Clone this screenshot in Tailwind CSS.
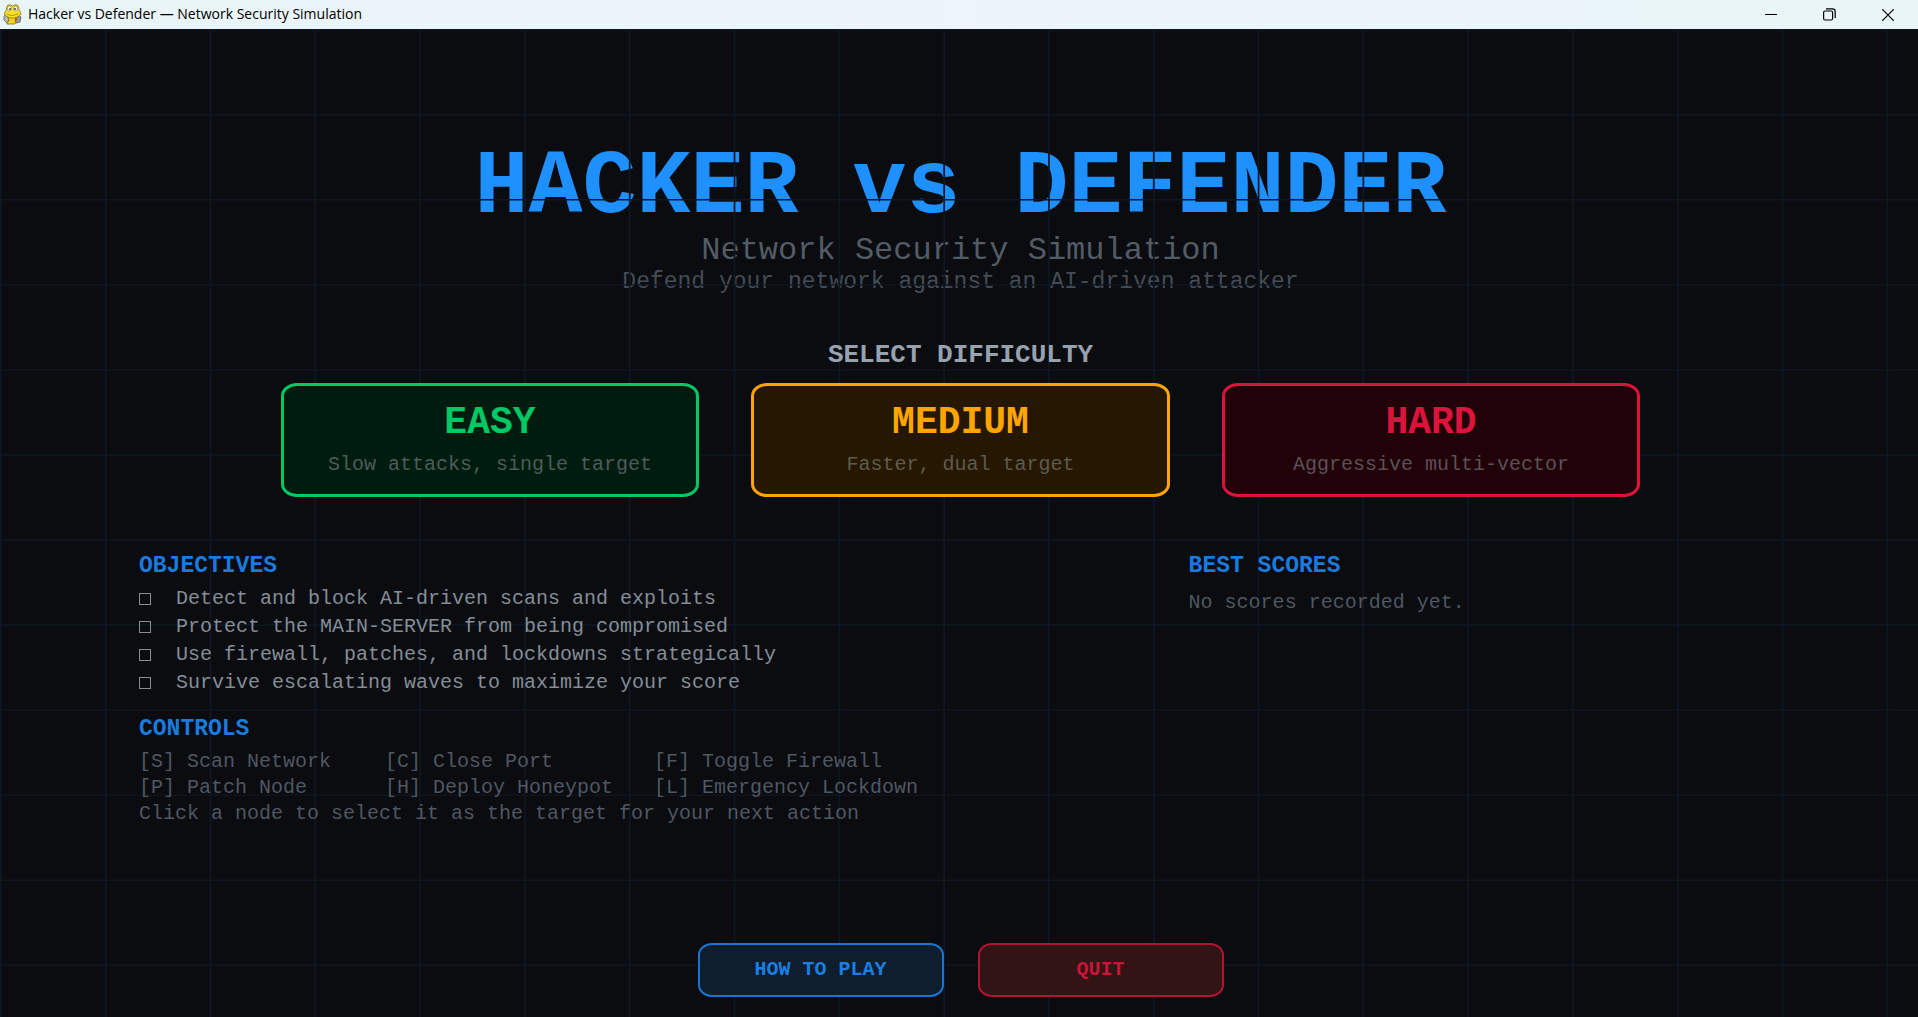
<!DOCTYPE html>
<html lang="en">
  <head>
    <meta charset="UTF-8" />
    <meta name="viewport" content="width=device-width, initial-scale=1.0" />
    <title>Hacker vs Defender — Network Security Simulation</title>
    <script src="https://cdn.jsdelivr.net/npm/@tailwindcss/browser@4"></script>
  </head>
  <body class="min-h-screen flex flex-col bg-[#0a0c10] font-['Liberation_Mono','Courier_New',monospace]">

    <!-- Window title bar -->
    <header class="h-[29px] flex items-center justify-between pl-[3px] bg-linear-to-r from-[#e9f5f7] via-[#edf4fc] to-[#e9f5f7] text-black">
      <div class="flex items-center gap-[6px]">
        <svg class="w-[19px] h-[21px]" viewBox="0 0 19 21" aria-hidden="true">
          <path d="M1 12l3-2 2 4 2 4-3 2-4-4z" fill="#b9bcb4" stroke="#5c5f55" stroke-width=".8" />
          <path d="M12 13l4-2 2 2-1 5-4 1z" fill="#9b9d98" stroke="#5c5f55" stroke-width=".8" />
          <path d="M5 13h8l-1 4 1 1-1 2H4v-2l2-1z" fill="#f2d51c" stroke="#7a6a10" stroke-width=".8" />
          <path d="M4 2Q5 .5 7 .8L9.500 2 12 .8q3-.5 3.500 2L16 6l2 3q.3 2-2 3l-4 2H7l-4-2q-2-1-1.500-3L3 7z" fill="#f7e02a" stroke="#8a7912" stroke-width=".8" />
          <ellipse cx="6.500" cy="4.500" rx="2" ry="2.600" fill="#fff" stroke="#7d7648" stroke-width=".6" />
          <ellipse cx="12.500" cy="4.500" rx="2" ry="2.600" fill="#fff" stroke="#7d7648" stroke-width=".6" />
          <circle cx="7" cy="5" r=".9" fill="#333" />
          <circle cx="12" cy="5" r=".9" fill="#333" />
          <path d="M3.500 10q6 3 12-.5" fill="none" stroke="#a58d0c" stroke-width=".9" />
          <circle cx="13" cy="15" r="1.200" fill="#d9453a" />
        </svg>
        <span class="text-[14px] leading-[20px] pb-[2px] font-['Segoe_UI','Open_Sans','Noto_Sans',sans-serif]">Hacker vs Defender — Network Security Simulation</span>
      </div>
      <div class="flex h-full">
        <button class="w-[58px] flex items-center justify-center" aria-label="Minimize">
          <svg class="w-[12px] h-[12px]" viewBox="0 0 12 12" fill="none" stroke="#000"><path d="M0 5.500h12" /></svg>
        </button>
        <button class="w-[58px] flex items-center justify-center" aria-label="Restore">
          <svg class="w-[13px] h-[13px]" viewBox="0 0 13 13" fill="none" stroke="#000" stroke-width="1.200"><rect x=".6" y="3" width="9" height="9" rx="1.500" /><path d="M3 .8h6.500q2.700 0 2.700 2.700V10" /></svg>
        </button>
        <button class="w-[60px] flex items-center justify-center" aria-label="Close">
          <svg class="w-[12px] h-[12px]" viewBox="0 0 12 12" fill="none" stroke="#000" stroke-width="1.200"><path d="M0 0l12 12M12 0L0 12" /></svg>
        </button>
      </div>
    </header>

    <main class="relative grow flex flex-col overflow-hidden pt-[114px] pb-[20px] pl-[3px]">
      <!-- Grid lines, drawn over the headline but under everything else -->
      <svg id="grid" class="absolute inset-0 w-full h-full pointer-events-none" viewBox="0 0 1098 697" preserveAspectRatio="none" stroke="#0f1722" stroke-width="1" aria-hidden="true"></svg>

      <div class="text-center">
        <h1 class="text-[90px] leading-[90px] font-bold text-[#1e90ff]">HACKER vs DEFENDER</h1>
        <p class="mt-[2px] text-[32px] leading-[32px] text-[#535b65]">Network Security Simulation</p>
        <p class="text-[23px] leading-[30px] text-[#444c56]">Defend your network against an AI-driven attacker</p>
      </div>

      <h2 class="relative mt-[42px] text-center text-[26px] leading-[32px] font-bold text-[#98a2ae]">SELECT DIFFICULTY</h2>

      <div class="relative mt-[12px] w-[71%] mx-auto grid grid-cols-3 gap-[52px]">
        <button class="border-3 border-[#00c864] bg-[#001c0e] rounded-[16px_/_13px] py-[17px] text-center">
          <span class="block text-[38px] leading-[40px] font-bold text-[#00c864]">EASY</span>
          <span class="block mt-[10px] text-[20px] leading-[24px] text-[#4c5c5b]">Slow attacks, single target</span>
        </button>
        <button class="border-3 border-[#ffa500] bg-[#261800] rounded-[16px_/_13px] py-[17px] text-center">
          <span class="block text-[38px] leading-[40px] font-bold text-[#ffa500]">MEDIUM</span>
          <span class="block mt-[10px] text-[20px] leading-[24px] text-[#5e5a50]">Faster, dual target</span>
        </button>
        <button class="border-3 border-[#dc143c] bg-[#210208] rounded-[16px_/_13px] py-[17px] text-center">
          <span class="block text-[38px] leading-[40px] font-bold text-[#dc143c]">HARD</span>
          <span class="block mt-[10px] text-[20px] leading-[24px] text-[#5c5058]">Aggressive multi-vector</span>
        </button>
      </div>

      <div class="relative mt-[55px] pl-[136px] grid grid-cols-[59%_1fr] text-[20px]">
        <div>
          <h3 class="text-[23px] leading-[28px] font-bold text-[#1a7ade]">OBJECTIVES</h3>
          <ul class="mt-[5px] leading-[28px] text-[#858d97]">
            <li class="flex items-center gap-[25px]"><span class="w-[12px] h-[12px] border border-[#858d97]"></span>Detect and block AI-driven scans and exploits</li>
            <li class="flex items-center gap-[25px]"><span class="w-[12px] h-[12px] border border-[#858d97]"></span>Protect the MAIN-SERVER from being compromised</li>
            <li class="flex items-center gap-[25px]"><span class="w-[12px] h-[12px] border border-[#858d97]"></span>Use firewall, patches, and lockdowns strategically</li>
            <li class="flex items-center gap-[25px]"><span class="w-[12px] h-[12px] border border-[#858d97]"></span>Survive escalating waves to maximize your score</li>
          </ul>

          <h3 class="mt-[18px] text-[23px] leading-[28px] font-bold text-[#1a7ade]">CONTROLS</h3>
          <div class="mt-[6px] leading-[26px] text-[#4f5761]">
            <div class="grid grid-cols-[246px_269px_1fr]">
              <span>[S] Scan Network</span>
              <span>[C] Close Port</span>
              <span>[F] Toggle Firewall</span>
              <span>[P] Patch Node</span>
              <span>[H] Deploy Honeypot</span>
              <span>[L] Emergency Lockdown</span>
            </div>
            <p>Click a node to select it as the target for your next action</p>
          </div>
        </div>

        <div>
          <h3 class="text-[23px] leading-[28px] font-bold text-[#1a7ade]">BEST SCORES</h3>
          <p class="mt-[9px] leading-[28px] text-[#4f5761]">No scores recorded yet.</p>
        </div>
      </div>

      <div class="relative mt-auto flex justify-center gap-[34px]">
        <button class="w-[246px] h-[54px] border-2 border-[#1b74d0] bg-[#0f1e2c] rounded-[14px_/_12px] text-[20px] font-bold text-[#1a7ee6]">HOW TO PLAY</button>
        <button class="w-[246px] h-[54px] border-2 border-[#b01432] bg-[#321414] rounded-[14px_/_12px] text-[20px] font-bold text-[#cc1439]">QUIT</button>
      </div>
    </main>

    <script>
      // one line every 60 units in both directions
      const grid = document.getElementById("grid");
      let lines = "";
      for (let x = 0; x < 1098; x += 60) lines += `<path d="M${x + 0.5} 0V697" />`;
      for (let y = 0; y < 697; y += 60) lines += `<path d="M0 ${y + 0.5}H1098" />`;
      grid.innerHTML = lines;
    </script>
  </body>
</html>
